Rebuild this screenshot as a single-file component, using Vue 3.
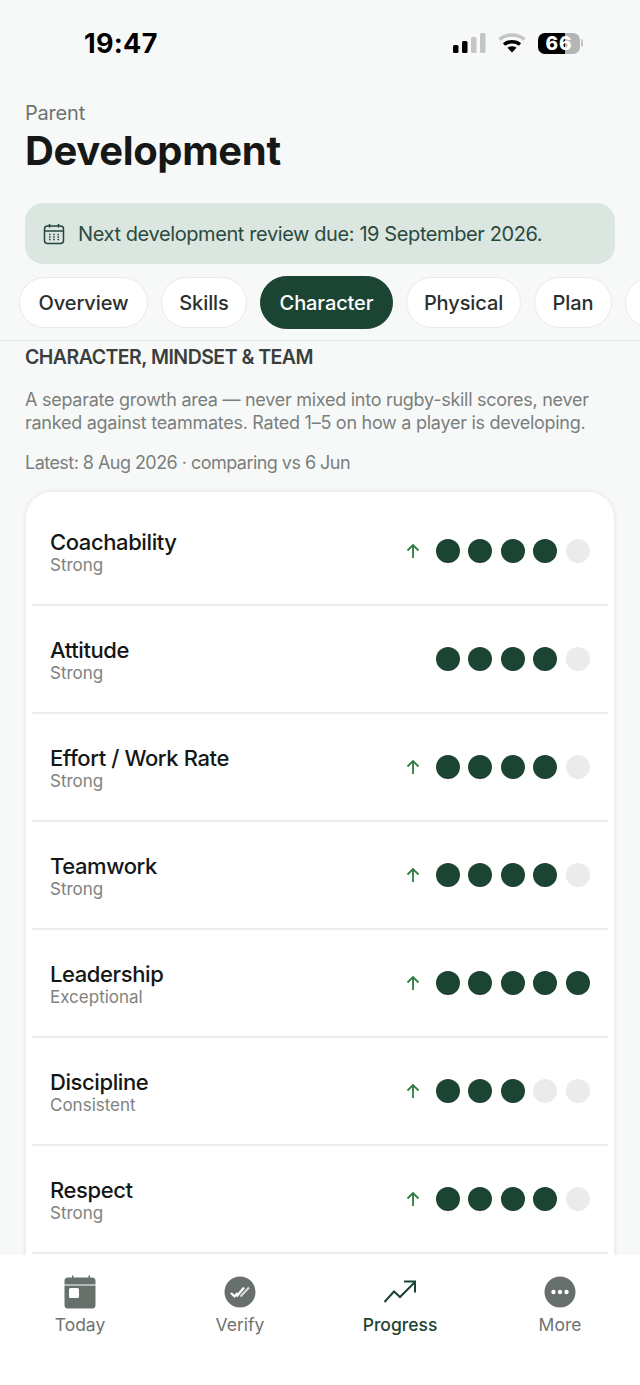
<script setup>
const tabs = [
  { label: 'Overview', w: 129 },
  { label: 'Skills', w: 86 },
  { label: 'Character', w: 133, active: true },
  { label: 'Physical', w: 115 },
  { label: 'Plan', w: 78 },
  { label: '', w: 60 },
]
const rows = [
  { name: 'Coachability', level: 'Strong', up: true, score: 4 },
  { name: 'Attitude', level: 'Strong', up: false, score: 4 },
  { name: 'Effort / Work Rate', level: 'Strong', up: true, score: 4 },
  { name: 'Teamwork', level: 'Strong', up: true, score: 4 },
  { name: 'Leadership', level: 'Exceptional', up: true, score: 5 },
  { name: 'Discipline', level: 'Consistent', up: true, score: 3 },
  { name: 'Respect', level: 'Strong', up: true, score: 4 },
]
</script>

<template>
  <div class="page">
    <header class="status">
      <span class="time">19:47</span>
      <div class="status-icons">
        <svg width="33" height="20" viewBox="0 0 33 20" class="signal">
          <rect x="0" y="12" width="5.500" height="8" rx="1.500" fill="#000" />
          <rect x="9" y="8" width="5.500" height="12" rx="1.500" fill="#000" />
          <rect x="18" y="4" width="5.500" height="16" rx="1.500" fill="#c4c6c5" />
          <rect x="27" y="0" width="5.500" height="20" rx="1.500" fill="#c4c6c5" />
        </svg>
        <svg width="28" height="20" viewBox="0 0 28 20" class="wifi">
          <path d="M1.500 6.500C8.500 0.500 19.500 0.500 26.500 6.500" fill="none" stroke="#c4c6c5" stroke-width="3.500" />
          <path d="M6 11.500C10.500 7.800 17.500 7.800 22 11.500" fill="none" stroke="#000" stroke-width="3.500" />
          <path d="M9.500 14.800C12 12.800 16 12.800 18.500 14.800L14 19.500Z" fill="#000" />
        </svg>
        <div class="battery">
          <div class="battery-body">
            <div class="battery-fill"></div>
            <span class="battery-num">66</span>
          </div>
          <div class="battery-cap"></div>
        </div>
      </div>
    </header>

    <section class="heading">
      <div class="eyebrow">Parent</div>
      <h1 class="title">Development</h1>
    </section>

    <div class="banner">
      <svg width="22" height="22" viewBox="0 0 22 22" fill="none" stroke="#24463a" stroke-width="1.500">
        <rect x="1.500" y="3" width="19" height="17.500" rx="3" />
        <path d="M1.500 8h19M6.500 1v3.500M15.500 1v3.500" />
        <path d="M6 11.500h1.500M10.200 11.500h1.500M14.500 11.500H16M6 14h1.500M10.200 14h1.500M14.500 14H16M6 16.500h1.500M10.200 16.500h1.500M14.500 16.500H16" stroke-width="1.300" />
      </svg>
      <span>Next development review due: 19 September 2026.</span>
    </div>

    <nav class="tabs">
      <div
        v-for="tab in tabs"
        :key="tab.label + tab.w"
        class="tab"
        :class="{ active: tab.active }"
        :style="{ width: tab.w + 'px' }"
      >{{ tab.label }}</div>
    </nav>

    <main class="content">
      <h2 class="section-title">CHARACTER, MINDSET &amp; TEAM</h2>
      <p class="intro">A separate growth area — never mixed into rugby-skill scores, never ranked against teammates. Rated 1–5 on how a player is developing.</p>
      <p class="latest">Latest: 8 Aug 2026 · comparing vs 6 Jun</p>

      <div class="card">
        <div v-for="row in rows" :key="row.name" class="row">
          <div class="row-text">
            <div class="row-name">{{ row.name }}</div>
            <div class="row-level">{{ row.level }}</div>
          </div>
          <svg v-if="row.up" class="arrow" width="16" height="16" viewBox="0 0 16 16" fill="none" stroke="#2f7d3c" stroke-width="1.800">
            <path d="M8 15V2M2.500 7.500 8 2l5.500 5.500" />
          </svg>
          <div class="dots">
            <span v-for="n in 5" :key="n" class="dot" :class="{ on: n <= row.score }"></span>
          </div>
        </div>
      </div>
    </main>

    <footer class="tabbar">
      <div class="nav-item">
        <svg width="34" height="34" viewBox="0 0 34 34">
          <path d="M9 0.500h1.500v3H9zM25.500 0.500H27v3h-1.500z" fill="#68706c" />
          <path d="M5 2.500h24a3.500 3.500 0 0 1 3.500 3.500v3.500H1.500V6A3.500 3.500 0 0 1 5 2.500Z" fill="#68706c" />
          <path d="M1.500 10.500h31V30a3.500 3.500 0 0 1-3.500 3.500H5A3.500 3.500 0 0 1 1.500 30Z" fill="#68706c" />
          <rect x="6" y="13" width="10" height="10" rx="1.500" fill="#fff" />
        </svg>
        <span>Today</span>
      </div>
      <div class="nav-item">
        <svg width="34" height="34" viewBox="0 0 34 34" fill="none">
          <circle cx="17" cy="17" r="15.500" fill="#68706c" />
          <path d="M8 18l3.500 3.500 3-3.500" stroke="#fff" stroke-width="2.200" />
          <path d="M13.500 21.500 21 12.500" stroke="#fff" stroke-width="2.200" />
          <path d="M17.500 21.500 26 12.500" stroke="#d9dcda" stroke-width="2" />
        </svg>
        <span>Verify</span>
      </div>
      <div class="nav-item current">
        <svg width="34" height="34" viewBox="0 0 34 34" fill="none" stroke="#1c4433" stroke-width="2">
          <path d="M1.500 27 11 16.500l6 5.500L31.500 7.500" />
          <path d="M21 6.500h11v11" />
        </svg>
        <span>Progress</span>
      </div>
      <div class="nav-item">
        <svg width="34" height="34" viewBox="0 0 34 34">
          <circle cx="17" cy="17" r="15.500" fill="#68706c" />
          <circle cx="10.500" cy="17" r="2.200" fill="#fff" />
          <circle cx="17" cy="17" r="2.200" fill="#fff" />
          <circle cx="23.500" cy="17" r="2.200" fill="#fff" />
        </svg>
        <span>More</span>
      </div>
    </footer>
  </div>
</template>

<style>
html, body { margin: 0; background: #f7f9f8; }
</style>

<style scoped>
.page {
  position: relative;
  width: 640px;
  height: 1385px;
  overflow: hidden;
  background: #f7f9f8;
  font-family: Inter, "Noto Sans", sans-serif;
  color: #1a1c1b;
}
.status {
  display: flex;
  align-items: center;
  justify-content: space-between;
  height: 86px;
  padding: 0 57px 0 84px;
  box-sizing: border-box;
}
.time { font-size: 27px; font-weight: 700; color: #000; letter-spacing: 0.3px; }
.status-icons { display: flex; align-items: center; gap: 12px; }
.battery { display: flex; align-items: center; }
.battery-body {
  position: relative;
  width: 42px;
  height: 21px;
  border-radius: 7px;
  background: #b4b6b5;
  overflow: hidden;
  text-align: center;
}
.battery-fill { position: absolute; left: 0; top: 0; bottom: 0; width: 27px; background: #000; }
.battery-num {
  position: relative;
  font-size: 19px;
  font-weight: 800;
  line-height: 21px;
  color: #fff;
  letter-spacing: 1px;
}
.battery-cap { width: 2px; height: 8px; background: #c4c6c5; border-radius: 0 2px 2px 0; margin-left: 1px; }
.heading { padding: 14px 25px 0; height: 117px; box-sizing: border-box; }
.eyebrow { font-size: 20px; line-height: 26px; color: #6e7371; letter-spacing: -0.2px; }
.title { margin: 1px 0 0; font-size: 40px; line-height: 48px; font-weight: 700; letter-spacing: -0.35px; color: #161817; }
.banner {
  display: flex;
  align-items: center;
  gap: 13px;
  height: 61px;
  margin: 0 25px;
  padding: 0 18px;
  box-sizing: border-box;
  background: #dce6e0;
  border-radius: 18px;
  font-size: 20px;
  color: #2a4a3d;
  letter-spacing: -0.4px;
}
.tabs {
  display: flex;
  gap: 13px;
  align-items: center;
  height: 77px;
  padding: 1px 0 0 19px;
  box-sizing: border-box;
  border-bottom: 1px solid #e2e5e3;
  overflow: hidden;
}
.tab {
  flex: none;
  height: 51px;
  padding-top: 1px;
  box-sizing: border-box;
  display: flex;
  align-items: center;
  justify-content: center;
  background: #fff;
  border: 1px solid #e8eaea;
  border-radius: 27px;
  font-size: 20px;
  font-weight: 500;
  color: #2c2f2e;
  letter-spacing: -0.1px;
}
.tab.active { height: 53px; background: #1b4433; border-color: #1b4433; color: #fff; }
.content { padding: 0 25px; }
.section-title {
  margin: 2px 0 0;
  font-size: 19.500px;
  line-height: 28px;
  font-weight: 600;
  color: #3a3e3c;
  letter-spacing: -0.52px;
}
.intro {
  margin: 17px 0 0;
  font-size: 18px;
  line-height: 23px;
  color: #7a7f7d;
  letter-spacing: -0.27px;
}
.latest {
  margin: 17px 0 0;
  font-size: 18px;
  line-height: 24px;
  color: #7a7f7d;
  letter-spacing: -0.54px;
}
.card {
  margin: 17px 1px 0;
  padding: 6px 6px 80px;
  background: #fff;
  border-radius: 26px;
  box-shadow: 0 0 5px rgba(0, 0, 0, 0.1);
}
.row {
  display: flex;
  align-items: center;
  height: 108px;
  box-sizing: border-box;
  padding: 0 18px;
  border-bottom: 2px solid #eceeed;
}
.row-text { flex: 1; padding-top: 2px; }
.row-name { font-size: 22px; line-height: 26px; font-weight: 500; color: #151716; letter-spacing: -0.4px; }
.row-level { font-size: 17px; line-height: 20px; color: #7d8280; }
.arrow { margin-right: 15px; }
.dots { display: flex; gap: 8.600px; }
.dot { width: 24px; height: 24px; border-radius: 50%; background: #e9ecea; }
.dot.on { background: #1b4433; }
.tabbar {
  position: absolute;
  left: 0;
  right: 0;
  bottom: 0;
  height: 130px;
  background: #fff;
  display: grid;
  grid-template-columns: repeat(4, 1fr);
  padding-top: 20px;
  box-sizing: border-box;
}
.nav-item {
  display: flex;
  flex-direction: column;
  align-items: center;
  gap: 4px;
  font-size: 17.500px;
  line-height: 24px;
  color: #6e7371;
}
.nav-item.current { color: #1c4433; font-weight: 500; }
</style>
